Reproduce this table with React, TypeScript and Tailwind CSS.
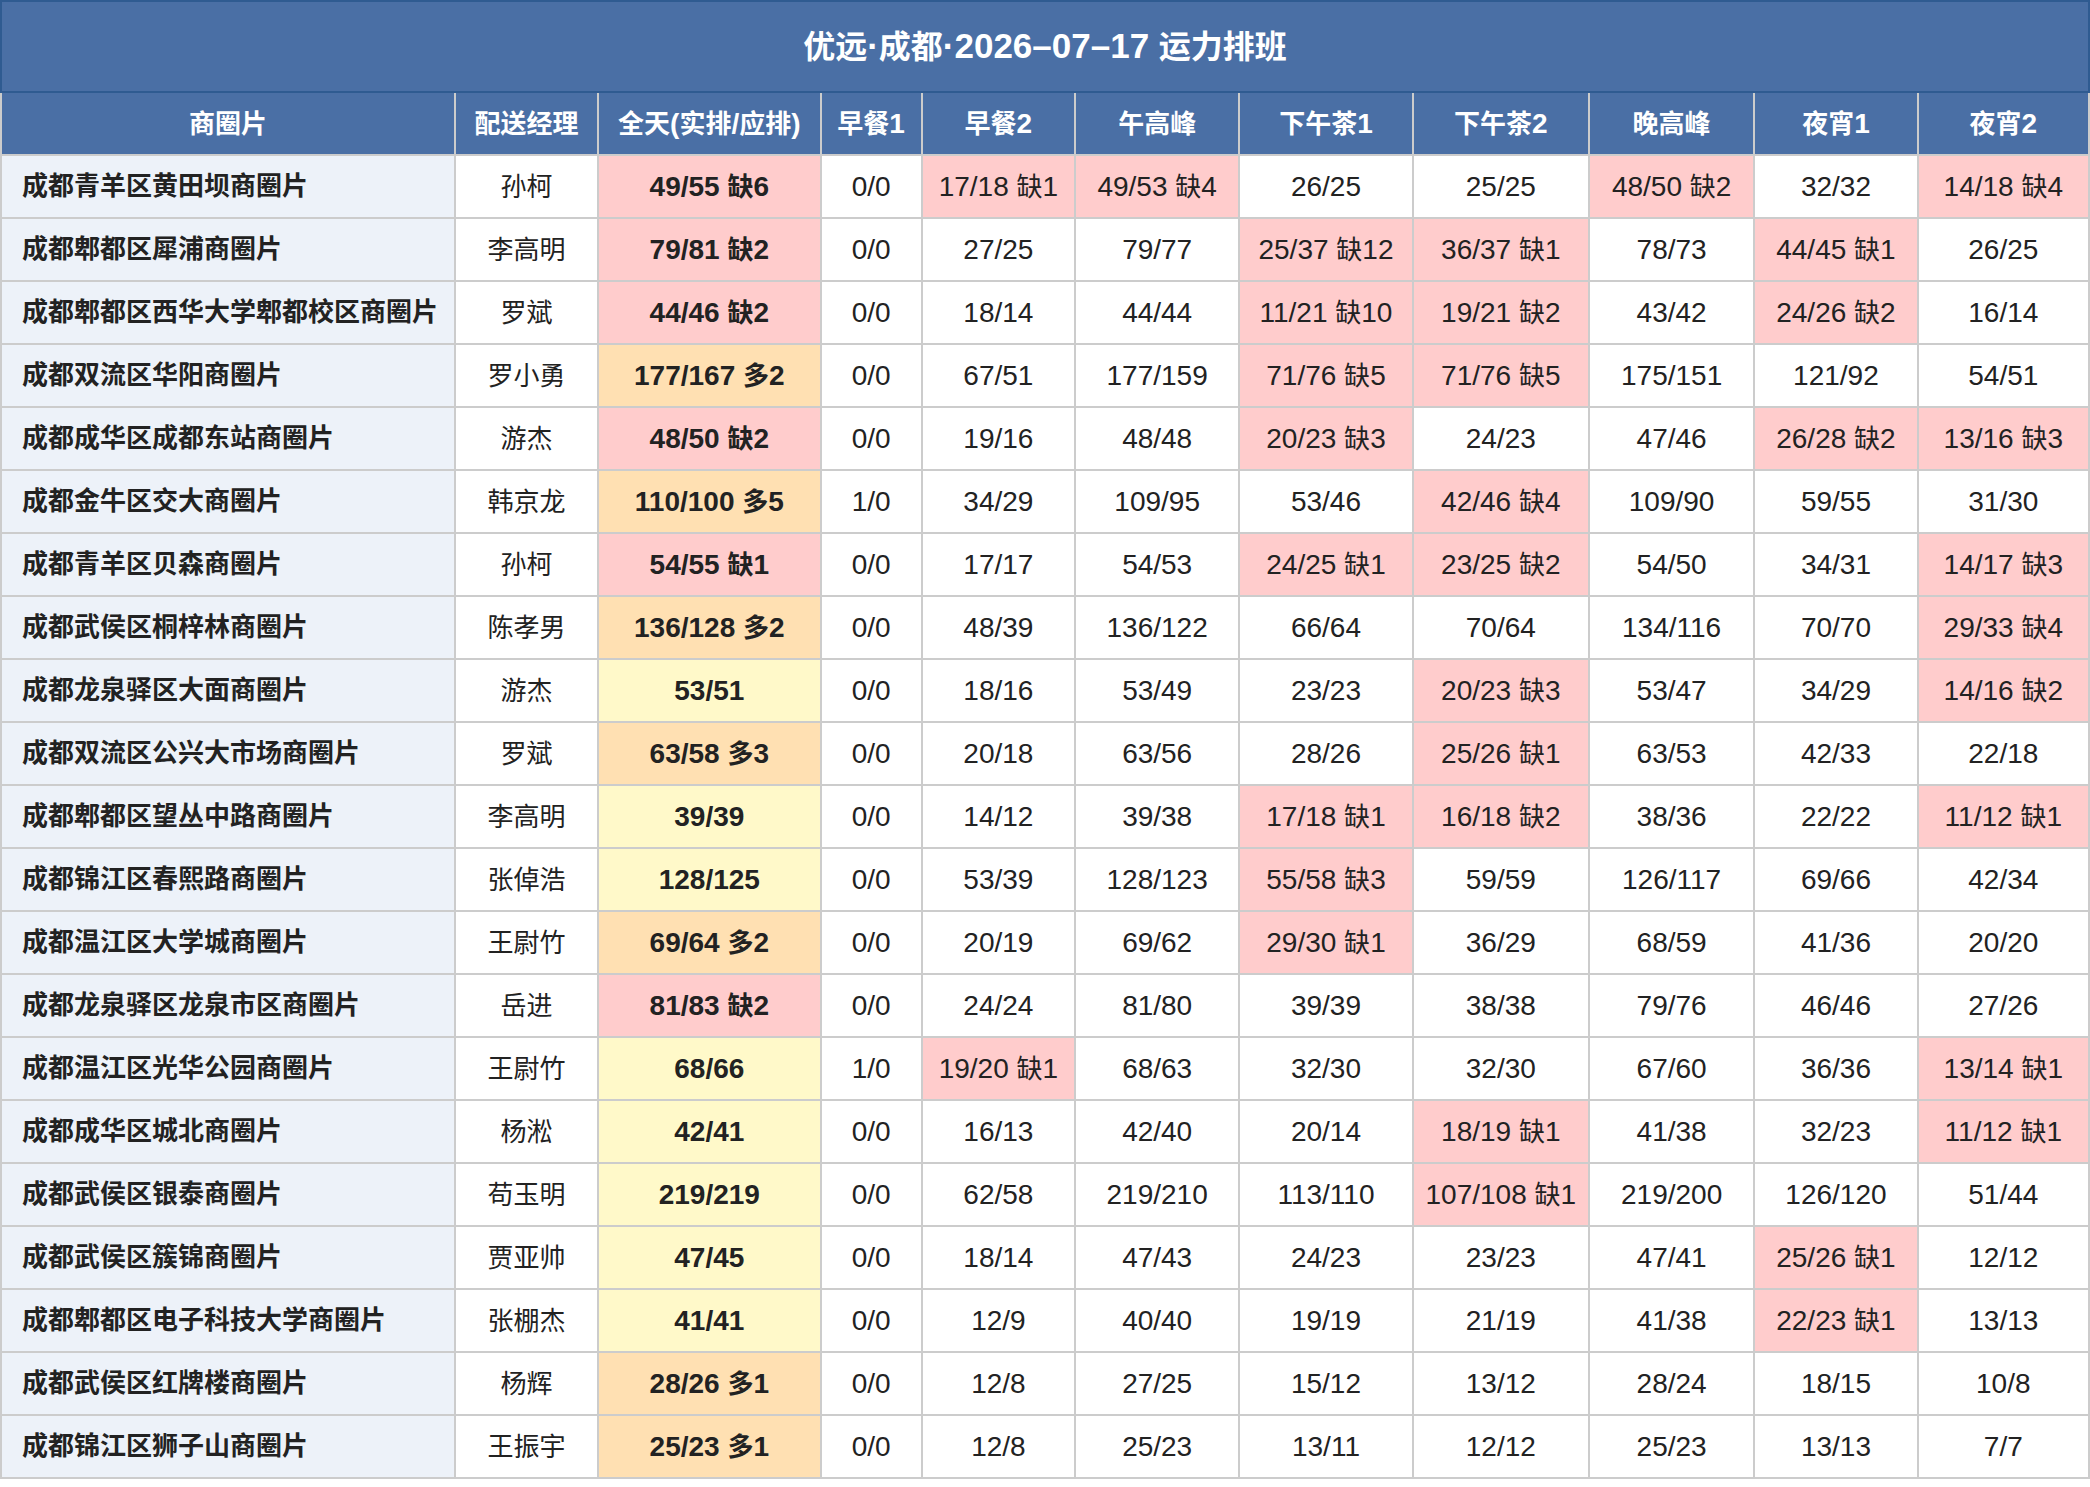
import React from "react";

const columns = [
  { label: "商圈片", w: "w-[453px]" },
  { label: "配送经理", w: "w-[143px]" },
  { label: "全天(实排/应排)", w: "w-[222px]" },
  { label: "早餐1", w: "w-[101px]" },
  { label: "早餐2", w: "w-[153px]" },
  { label: "午高峰", w: "w-[164px]" },
  { label: "下午茶1", w: "w-[173px]" },
  { label: "下午茶2", w: "w-[176px]" },
  { label: "晚高峰", w: "w-[165px]" },
  { label: "夜宵1", w: "w-[163px]" },
  { label: "夜宵2", w: "w-[171px]" },
];

// 商圈片, 经理, 全天, 早餐1, 早餐2, 午高峰, 下午茶1, 下午茶2, 晚高峰, 夜宵1, 夜宵2
const rows: string[][] = [
  ["成都青羊区黄田坝商圈片", "孙柯", "49/55 缺6", "0/0", "17/18 缺1", "49/53 缺4", "26/25", "25/25", "48/50 缺2", "32/32", "14/18 缺4"],
  ["成都郫都区犀浦商圈片", "李高明", "79/81 缺2", "0/0", "27/25", "79/77", "25/37 缺12", "36/37 缺1", "78/73", "44/45 缺1", "26/25"],
  ["成都郫都区西华大学郫都校区商圈片", "罗斌", "44/46 缺2", "0/0", "18/14", "44/44", "11/21 缺10", "19/21 缺2", "43/42", "24/26 缺2", "16/14"],
  ["成都双流区华阳商圈片", "罗小勇", "177/167 多2", "0/0", "67/51", "177/159", "71/76 缺5", "71/76 缺5", "175/151", "121/92", "54/51"],
  ["成都成华区成都东站商圈片", "游杰", "48/50 缺2", "0/0", "19/16", "48/48", "20/23 缺3", "24/23", "47/46", "26/28 缺2", "13/16 缺3"],
  ["成都金牛区交大商圈片", "韩京龙", "110/100 多5", "1/0", "34/29", "109/95", "53/46", "42/46 缺4", "109/90", "59/55", "31/30"],
  ["成都青羊区贝森商圈片", "孙柯", "54/55 缺1", "0/0", "17/17", "54/53", "24/25 缺1", "23/25 缺2", "54/50", "34/31", "14/17 缺3"],
  ["成都武侯区桐梓林商圈片", "陈孝男", "136/128 多2", "0/0", "48/39", "136/122", "66/64", "70/64", "134/116", "70/70", "29/33 缺4"],
  ["成都龙泉驿区大面商圈片", "游杰", "53/51", "0/0", "18/16", "53/49", "23/23", "20/23 缺3", "53/47", "34/29", "14/16 缺2"],
  ["成都双流区公兴大市场商圈片", "罗斌", "63/58 多3", "0/0", "20/18", "63/56", "28/26", "25/26 缺1", "63/53", "42/33", "22/18"],
  ["成都郫都区望丛中路商圈片", "李高明", "39/39", "0/0", "14/12", "39/38", "17/18 缺1", "16/18 缺2", "38/36", "22/22", "11/12 缺1"],
  ["成都锦江区春熙路商圈片", "张倬浩", "128/125", "0/0", "53/39", "128/123", "55/58 缺3", "59/59", "126/117", "69/66", "42/34"],
  ["成都温江区大学城商圈片", "王尉竹", "69/64 多2", "0/0", "20/19", "69/62", "29/30 缺1", "36/29", "68/59", "41/36", "20/20"],
  ["成都龙泉驿区龙泉市区商圈片", "岳进", "81/83 缺2", "0/0", "24/24", "81/80", "39/39", "38/38", "79/76", "46/46", "27/26"],
  ["成都温江区光华公园商圈片", "王尉竹", "68/66", "1/0", "19/20 缺1", "68/63", "32/30", "32/30", "67/60", "36/36", "13/14 缺1"],
  ["成都成华区城北商圈片", "杨淞", "42/41", "0/0", "16/13", "42/40", "20/14", "18/19 缺1", "41/38", "32/23", "11/12 缺1"],
  ["成都武侯区银泰商圈片", "苟玉明", "219/219", "0/0", "62/58", "219/210", "113/110", "107/108 缺1", "219/200", "126/120", "51/44"],
  ["成都武侯区簇锦商圈片", "贾亚帅", "47/45", "0/0", "18/14", "47/43", "24/23", "23/23", "47/41", "25/26 缺1", "12/12"],
  ["成都郫都区电子科技大学商圈片", "张棚杰", "41/41", "0/0", "12/9", "40/40", "19/19", "21/19", "41/38", "22/23 缺1", "13/13"],
  ["成都武侯区红牌楼商圈片", "杨辉", "28/26 多1", "0/0", "12/8", "27/25", "15/12", "13/12", "28/24", "18/15", "10/8"],
  ["成都锦江区狮子山商圈片", "王振宇", "25/23 多1", "0/0", "12/8", "25/23", "13/11", "12/12", "25/23", "13/13", "7/7"],
];

// CJK glyphs run a little smaller than the digits in the original render
function Mixed({ text, cjk }: { text: string; cjk: string }) {
  const parts = text.split(/([\u3000-\u9fff\uff00-\uffef]+)/);
  return (
    <>
      {parts.map((p, i) =>
        i % 2 === 1 ? (
          <span key={i} className={cjk}>
            {p}
          </span>
        ) : (
          p
        )
      )}
    </>
  );
}

function cellBg(value: string, col: number) {
  if (value.includes("缺")) return "bg-[#ffcccc]";
  if (col === 2) return value.includes("多") ? "bg-[#ffe0b2]" : "bg-[#fff9c9]";
  return "bg-white";
}

export default function App() {
  return (
    <div className="w-[2090px] bg-white font-['Liberation_Sans','Noto_Sans_CJK_SC',sans-serif] text-[#222222]">
      <table className="w-[2090px] table-fixed border-collapse">
        <colgroup>
          {columns.map((c) => (
            <col key={c.label} className={c.w} />
          ))}
        </colgroup>
        <thead>
          <tr>
            <th
              colSpan={11}
              className="h-[91px] border-2 border-[#2f5b91] bg-[#4a6fa5] text-center text-[35px] font-bold text-white"
            >
              <Mixed text="优远·成都·2026–07–17 运力排班" cjk="text-[32px]" />
            </th>
          </tr>
          <tr>
            {columns.map((c) => (
              <th
                key={c.label}
                className="h-[63px] whitespace-nowrap border-2 border-t-0 border-[#cccccc] bg-[#4a6fa5] p-0 text-center text-[28px] font-bold text-white"
              >
                <Mixed text={c.label} cjk="text-[26px]" />
              </th>
            ))}
          </tr>
        </thead>
        <tbody>
          {rows.map((r, i) => (
            <tr key={i}>
              {r.map((v, j) =>
                j === 0 ? (
                  <td
                    key={j}
                    className="h-[63px] whitespace-nowrap border-2 border-[#cccccc] bg-[#edf2f9] pl-5 pr-0 text-left text-[26px] font-bold"
                  >
                    {v}
                  </td>
                ) : (
                  <td
                    key={j}
                    className={`h-[63px] whitespace-nowrap border-2 border-[#cccccc] p-0 text-center text-[28px] ${
                      j === 2 ? "font-bold" : "font-normal"
                    } ${cellBg(v, j)}`}
                  >
                    <Mixed text={v} cjk="text-[26px]" />
                  </td>
                )
              )}
            </tr>
          ))}
        </tbody>
      </table>
    </div>
  );
}
